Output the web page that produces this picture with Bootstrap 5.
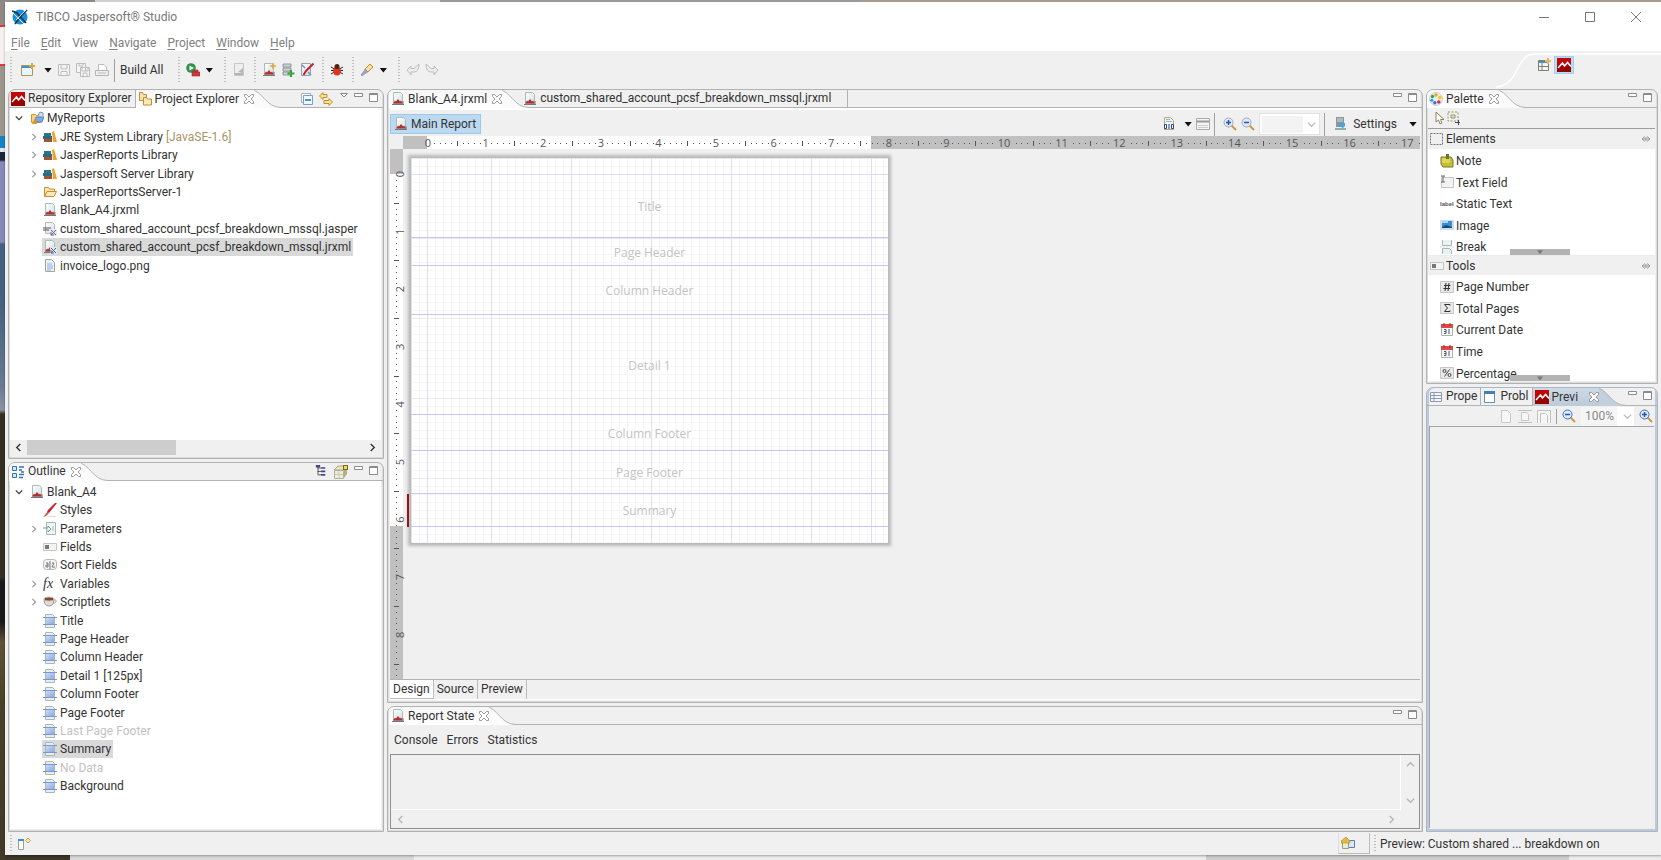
<!DOCTYPE html>
<html lang="en">
<head>
<meta charset="utf-8">
<meta name="viewport" content="width=device-width, initial-scale=1">
<title>TIBCO Jaspersoft® Studio</title>
<link href="https://cdn.jsdelivr.net/npm/bootstrap@5.3.0/dist/css/bootstrap.min.css" rel="stylesheet">
<style>
:root { --line:#b2b2b2; --face:#f0f0f0; --ink:#333; }
html, body { height:100%; }
body { font:12px/18px Roboto,"Open Sans",sans-serif; color:var(--ink); background:#dcdcdc; overflow:hidden; }
button, select, textarea, input { font:inherit; color:inherit; }
button { border:0; background:none; padding:0; white-space:nowrap; }
svg { display:block; flex:none; }
.ico { width:14px; height:14px; }
.desk { background:linear-gradient(90deg,#3b3626 0 70px,#d9d9d9 70px 414px,#ececec 414px 1206px,#cdcdcd 1206px 1569px,#ececec 1569px); }
.desk-side { width:5px; background:linear-gradient(#8e8b84 0 23px,#e33 23px 25px,#f6f0ee 25px 62px,#e33 62px 64px,#9a968b 64px 134px,#1583c9 134px 146px,#dce6ee 146px 150px,#1c2733 150px 158px,#8488bb 160px 240px,#46617f 242px 300px,#6a7a92 385px,#8b93a3 408px,#332f22 412px 575px,#19191b 580px 620px,#5d5238 640px,#4a412c 700px,#3f3926); }
.desk-top { height:2px; background:linear-gradient(90deg,#8a8984 0 95px,#d0d0d0 95px 440px,#999 440px 860px,#a69c8b 860px); }
.win { background:var(--face); margin-bottom:5px; box-shadow:0 1px 2px #0005; }
.titlebar { background:#fff; color:#777; height:49px; }
.caption-row { height:30px; padding:0 19px 0 7px; }
.caption-row button { width:12px; }
.winbtns { gap:34px; }
.menus { gap:11px; padding:2px 6px; color:#808080; }
.menus a { color:inherit; text-decoration:none; }
.menus u { text-underline-offset:2px; }
.mainbar { height:38px; padding:0 0 0 5px; }
.tgroup { display:flex; align-items:center; gap:5px; padding-right:8px; }
.tgroup.wide { padding-right:11px; }
.grip { width:2px; height:26px; margin-right:1px; background:repeating-linear-gradient(#bdbdbd 0 1px,transparent 1px 3px); flex:none; }
.drop { width:8px; height:5px; background:#111; clip-path:polygon(0 0,100% 0,50% 100%); flex:none; }
.vsep { width:1px; height:23px; background:#a0a0a0; flex:none; }
.persp { width:165px; position:relative; }
.persp .curve { position:absolute; inset:0; width:100%; height:100%; }
.persp .picks { position:relative; padding:6px 0 0 41px; gap:4px; }
.persp .on { background:#b9dcf6; outline:1px solid #a4cff1; padding:1px 2px; }
.work { padding:0 3px 0 3px; gap:3px; min-height:0; }
.side-l { width:376px; gap:3px; }
.mid { gap:3px; min-width:0; }
.side-r { width:232px; gap:3px; }
.pane { border:1px solid var(--line); border-radius:7px 7px 0 0; box-shadow:inset -1px -1px 0 #dcdcdc, inset 1px 0 0 #dcdcdc; background:var(--face); overflow:hidden; display:flex; flex-direction:column; min-height:0; padding:0 2px 2px 1px; }
.pane.inset { padding:0 2px 2px 2px; }
.tabs { height:18px; display:flex; flex:none; position:relative; margin:0 -2px 0 -1px; }
.tabs::before { content:""; position:absolute; left:0; right:0; bottom:0; height:1px; background:var(--line); }
.tabs > * { position:relative; }
.tabs button { display:flex; align-items:center; gap:3px; height:17px; line-height:17px; padding-left:2px; }
.tabs .cur { background:linear-gradient(#f6f6f6,#fff); height:18px; z-index:1; }
.tabs .edge { border-right:1px solid var(--line); padding-right:3px; }
.tabs .after { margin-left:-8px; }
.tabs .x { width:10px; height:10px; margin-left:2px; }
.tabs .sweep { width:34px; height:18px; margin-left:-7px; }
.acts { margin-left:auto; display:flex; gap:3px; padding-right:3px; align-items:flex-start; }
.acts svg { width:12px; height:12px; margin-top:2px; }
.acts .big { width:14px; height:14px; margin-right:2px; }
.white { background:#fff; }
.tree { list-style:none; margin:0; padding:0 0 0 4px; display:grid; grid-auto-rows:1fr; }
.tree li { display:flex; align-items:center; white-space:nowrap; }
.tree .tw { width:10px; height:8px; margin-right:5px; }
.tree .kid { padding-left:15px; }
.tree .kid .tw { margin-right:3px; color:#9a9a9a; }
.tree .item { display:flex; align-items:center; gap:3px; padding:0 2px 0 1px; height:18px; line-height:18px; }
.tree .sel { background:#d9d9d9; }
.tree .dim { color:#c3c3c3; }
.lib-ver { color:#a89468; }
.t-proj { height:166px; margin-top:1px; }
.t-out { height:313px; margin-top:2px; }
.sb { height:16px; background:var(--face); display:flex; align-items:center; flex:none; }
.sb svg { width:9px; height:9px; margin:0 4px; }
.sb .thumb { height:15px; width:149px; background:#cdcdcd; }
.edbar { height:28px; gap:4px; padding:2px 3px 0 0; border-top:2px solid #fff; }
.mainrep { border:1px solid #99c9ef; background:#bcd9f0; height:20px; width:91px; padding:0 4px 0 3px; gap:3px; line-height:18px; }
.setbtn { gap:6px; margin-right:8px; }
.combo { appearance:none; -webkit-appearance:none; border:1px solid #e2e2e2; border-radius:0; width:61px; height:22px; padding:0 4px; outline:0; background:linear-gradient(#f3f3f3,#f3f3f3) 2px 2px/41px 17px no-repeat,#fff; }
.combobox { position:relative; }
.combobox svg { position:absolute; right:4px; top:50%; width:9px; height:9px; margin-top:-4px; pointer-events:none; color:#c0c0c0; }
.ruler-h { height:13px; margin-left:13px; background:linear-gradient(90deg,#c0c0c0 24px,#fff 24px 468px,#c0c0c0 468px); overflow:hidden; flex:none; }
.ruler-h svg { width:100%; height:13px; }
.ruler-v { width:13px; background:linear-gradient(#c0c0c0 25px,#fff 25px 377px,#c0c0c0 377px); flex:none; }
.ruler-v svg { width:16px; height:100%; }
text.rt { font:11px "Open Sans",sans-serif; fill:#555; }
.canvas { overflow:hidden; min-height:0; }
.sheet { width:477px; height:385px; margin:9px 8px; padding-top:16px; flex:none; font-family:"Open Sans",sans-serif; box-shadow:0 0 3px 3px #b8b8b8; color:#c3c3c3; align-self:flex-start;
 background:
 linear-gradient(#dcdcff,#dcdcff) 16px 0/1px 100% no-repeat, linear-gradient(#dcdcff,#dcdcff) 460px 0/1px 100% no-repeat,
 linear-gradient(#dcdcff,#dcdcff) 0 16px/100% 1px no-repeat,
 linear-gradient(90deg,#e2e2e2 1px,transparent 1px) 0 0/80px 80px,
 linear-gradient(#ebebeb 1px,transparent 1px) 0 0/80px 80px,
 linear-gradient(90deg,#f6f6f6 1px,transparent 1px) 0 0/8px 8px,
 linear-gradient(#f6f6f6 1px,transparent 1px) 0 0/8px 8px, #fff; }
.band { border-bottom:1px solid #c5c5fa; display:flex; align-items:center; justify-content:center; position:relative; padding-top:2px; }
.band.active::before { content:""; position:absolute; left:-4px; top:0; bottom:-1px; width:2px; background:#9c1111; }
.pages { height:21px; border-top:1px solid var(--line); border-bottom:1px solid #fff; flex:none; align-items:flex-start; }
.pages button { height:19px; line-height:19px; padding:0 3px; border-right:1px solid #bdbdbd; }
.pages .cur { background:#fff; border-bottom:1px solid #bbb; }
.logtabs { height:29px; gap:9px; padding-left:4px; }
.log { border:1px solid #8f8f8f; background:var(--face); color:#b5b5b5; display:grid; grid-template-columns:1fr 18px; grid-template-rows:1fr 18px; }
.log textarea { border:0; border-right:1px solid #fff; border-bottom:1px solid #fff; background:none; resize:none; outline:0; min-width:0; min-height:0; width:100%; }
.log .sbv { display:flex; flex-direction:column; justify-content:space-between; align-items:center; padding:5px 0; }
.log .sbh { display:flex; justify-content:space-between; align-items:center; padding:0 5px; }
.log svg { width:9px; height:9px; }
.paltools { height:21px; padding:0 4px; gap:1px; border-bottom:1px solid #9d9d9d; flex:none; }
.palhead { height:20px; line-height:20px; padding:0 4px 0 2px; gap:2px; background:#f0f0f0; flex:none; width:100%; }
.drawer { position:relative; overflow:hidden; background:#fff; flex:1 1 0; }
.pal { list-style:none; margin:0; padding:2px 0 0 12px; height:110px; display:grid; grid-auto-rows:1fr; }
.pal button { display:flex; align-items:center; gap:2px; height:21px; line-height:23px; }
.pal svg { margin-bottom:2px; }
.more { position:absolute; bottom:0; left:82px; width:60px; height:6px; background:#b3b3b3; display:flex; justify-content:center; align-items:center; }
.more .drop { width:6px; height:4px; background:#777; }
.pane.live { border-color:#a9b8c8; box-shadow:inset 2px 0 0 #bfcad6, inset -2px -2px 0 #bfcad6; padding:0 3px 3px 2px; }
.live .tabs { margin:0 -3px 0 -2px; }
.live .tabs .cur { background:linear-gradient(#cdd9e4,#bccbda); }
.prevbar { height:20px; gap:5px; padding-right:1px; color:#8a8a8a; flex:none; }
.prevbar .vsep { height:15px; }
.prevbar .combo { border:0; width:53px; height:19px; background:linear-gradient(90deg,#f5f5f5 36px,#fff 36px); }
.prevbar .combobox svg { right:2px; }
.prevbody { border:1px solid #a5a5a5; border-width:1px 0 0 1px; }
.foot { height:23px; padding:0 0 0 5px; flex:none; }
.foot .grip { height:18px; }
.foot .job { width:32px; height:21px; border-right:1px solid #bbb; border-bottom:1px solid #bbb; border-left:1px solid #ddd; padding-left:2px; }
.foot .msg { width:284px; padding-left:3px; }
</style>
</head>
<body class="d-flex flex-column">
<svg width="0" height="0" class="position-absolute" aria-hidden="true">
<defs>
<linearGradient id="gPaper" x2="1" y2="1"><stop offset="0" stop-color="#fff"/><stop offset="1" stop-color="#cfdfe2"/></linearGradient>
<linearGradient id="gBand" x2="1" y2="1"><stop offset="0" stop-color="#c9dcf8"/><stop offset="1" stop-color="#8fa9dc"/></linearGradient>
</defs>
<symbol id="report" viewBox="0 0 14 14"><path d="M2.500.5h7l2 2v9h-9z" fill="url(#gPaper)" stroke="#a9bcb8"/><path d="M2 11.500l2-3 1 1 2-2.500 2 2.500 1-1 2 3z" fill="#b03030"/><path d="M1 12.500h12M12 9v3" stroke="#777"/></symbol>
<symbol id="reportc" viewBox="0 0 14 14"><use href="#report"/><path d="M7 7h7v7H7z" fill="#e4e8f0"/><path d="M8 8l5 5M13 8l-5 5M8 10v3h3" stroke="#445c8c" fill="none"/></symbol>
<symbol id="jasperf" viewBox="0 0 14 14"><path d="M2.500.5h7l2 2v9h-9z" fill="url(#gPaper)" stroke="#b5b9b8"/><path d="M1 5v4M3 5v4M5 5v4M7 5v2" stroke="#555"/><path d="M7 7h7v7H7z" fill="#e4e8f0"/><path d="M8 8l5 5M13 8l-5 5M8 10v3h3" stroke="#5a6a80" fill="none"/></symbol>
<symbol id="jred" viewBox="0 0 14 14"><path d="M0 0h14v14H0z" fill="#c00808"/><path d="M0 8h14v6H0z" fill="#900"/><path d="M1 10L5.500 5 7.500 8 10.500 4.500 14 8.500" stroke="#fff" stroke-width="1.500" fill="none"/></symbol>
<symbol id="folders" viewBox="0 0 14 14"><path d="M1.500.5h3l1 2h3v6h-7z" fill="#f7e3a8" stroke="#c18a3b"/><path d="M5.500 5.500h3l1 1.500h4v6h-8z" fill="#fbe9b4" stroke="#c18a3b"/></symbol>
<symbol id="proj" viewBox="0 0 14 14"><path d="M1.500 3.500h4l1 1h4v7h-9z" fill="#f6d487" stroke="#c9933c"/><path d="M5 11l1-5h8l-2 5z" fill="#7fa8dc" stroke="#5b86c4"/><path d="M8 4l2-3 3 1v4" fill="#cfe0f6" stroke="#6a93cc"/><path d="M2 13l3-6 2 6z" fill="#d99a2b"/></symbol>
<symbol id="lib" viewBox="0 0 14 14"><path d="M1 3h7v3H1z" fill="#287a78"/><path d="M0 6h9v3H0z" fill="#2f6690"/><path d="M1 9h8v3H1z" fill="#a4532c"/><path d="M9 2l2-1 3 11h-4z" fill="#eba432"/></symbol>
<symbol id="fopen" viewBox="0 0 14 14"><path d="M1.500 11V2.500h4l1 1.500h5v2" fill="#fbe7b0" stroke="#c98c35"/><path d="M1.500 11.500L4 6.500h9.500l-2.500 5z" fill="#fce8b2" stroke="#c98c35"/></symbol>
<symbol id="file" viewBox="0 0 14 14"><path d="M2.500.5h6l3 3v9h-9z" fill="#eaf0fb" stroke="#a5a98a"/><path d="M4 5h5M4 7h6M4 9h6M4 11h4" stroke="#8fb0e0"/></symbol>
<symbol id="band" viewBox="0 0 14 14"><path d="M2.500.5h7l2 2v11h-9z" fill="#e6efee" stroke="#a4bab2"/><path d="M3 4h8v6H3z" fill="url(#gBand)"/><path d="M0 3.500h14M0 10.500h14" stroke="#7f93d8"/></symbol>
<symbol id="brush" viewBox="0 0 14 14"><path d="M14 0L12 0 5 7 4 9l2 1z" fill="#c4232b"/><path d="M4.500 8.500l1.500 1.500-3 3-3 1 2-2z" fill="#b7583e"/><path d="M5 13.500h8" stroke="#ddd"/></symbol>
<symbol id="param" viewBox="0 0 14 14"><path d="M3.500.5h9v12h-9z" fill="#eef5f4" stroke="#a3b9b5"/><path d="M0 6h5V4l3 3-3 3V8" fill="none" stroke="#7f9a96"/><path d="M10 4v5" stroke="#a3b9b5"/></symbol>
<symbol id="field" viewBox="0 0 14 14"><path d="M.5 3.500h13v7H.5z" fill="#f4f4f4" stroke="#c5c5c5"/><path d="M2 5h4v4H2z" fill="#777"/></symbol>
<symbol id="sort" viewBox="0 0 14 14"><rect x=".5" y="1.500" width="13" height="10" rx="3" fill="#f3f3f3" stroke="#b5b5b5"/><path d="M3 5h2v4H3V7h2M7 3v8M9 5h2L9 9h3" stroke="#777" fill="none"/></symbol>
<symbol id="cup" viewBox="0 0 14 14"><path d="M1 4h10q0 7-5 7t-5-7z" fill="#ddd" stroke="#999"/><ellipse cx="6" cy="4" rx="5" ry="2" fill="#8a4a24" stroke="#bbb"/><path d="M11 5q3-1 2 2l-3 2" fill="none" stroke="#aaa"/></symbol>
<symbol id="tmin" viewBox="0 0 12 12"><path d="M1.500 1.500h8v3h-8z" fill="#fff" stroke="#8b8b8b"/></symbol>
<symbol id="tmax" viewBox="0 0 12 12"><path d="M1.500 1.500h8v8h-8z" fill="#fff" stroke="#8b8b8b"/><path d="M1 2.500h9" stroke="#8b8b8b"/></symbol>
<symbol id="vmenu" viewBox="0 0 12 12"><path d="M2.500 1.500h7L6 5z" fill="#fff" stroke="#8b8b8b"/></symbol>
<symbol id="cross" viewBox="0 0 10 10"><path d="M.5.5h2L5 3 7.500.5h2v2L7 5l2.500 2.500v2h-2L5 7 2.500 9.500h-2v-2L3 5 .5 2.500z" fill="#fff" stroke="#999"/></symbol>
<symbol id="right" viewBox="0 0 10 10"><path d="M3 1l4 4-4 4" fill="none" stroke="currentColor" stroke-width="1.500"/></symbol>
<symbol id="left" viewBox="0 0 10 10"><path d="M7 1L3 5l4 4" fill="none" stroke="currentColor" stroke-width="1.500"/></symbol>
<symbol id="down" viewBox="0 0 10 10"><path d="M1 3l4 4 4-4" fill="none" stroke="currentColor" stroke-width="1.500"/></symbol>
<symbol id="up" viewBox="0 0 10 10"><path d="M1 7l4-4 4 4" fill="none" stroke="currentColor" stroke-width="1.500"/></symbol>
<symbol id="sweep" viewBox="0 0 34 18"><path d="M0 0H5C15 0 20 17.500 34 17.500V18H0z" fill="var(--fill,#fbfbfb)"/><path d="M0 -.5H3C16 0 18 17.500 34 17.500" fill="none" stroke="#b2b2b2"/></symbol>
<symbol id="collapse" viewBox="0 0 14 14"><path d="M1.500 1.500h9v9h-9z" fill="#fff" stroke="#9fb4c8"/><path d="M3.500 3.500h9v9h-9z" fill="#eef6ff" stroke="#7ba0c8"/><path d="M5 8h6" stroke="#2c6cb0" stroke-width="1.500"/></symbol>
<symbol id="link" viewBox="0 0 14 14"><path d="M4 .5L.5 4 4 7.500V5.500h4v-3H4zM10 6.500v2H5v3h5v2l3.500-3.500z" fill="#fbe09a" stroke="#c88a2a"/></symbol>
<symbol id="new" viewBox="0 0 14 14"><path d="M.5 2.500h11v10H.5z" fill="#e9f5fc" stroke="#a89a55"/><path d="M1 3h9v2H1z" fill="#3f8fd0"/><path d="M11 0v6M8 3h6" stroke="#dca83c" stroke-width="2"/></symbol>
<symbol id="save" viewBox="0 0 14 14"><path d="M1.500 1.500h11v11h-11zM4 2v4h6V2M4 12V8.500h6V12" fill="#f5f5f5" stroke="#bcbcbc"/></symbol>
<symbol id="saveall" viewBox="0 0 14 14"><path d="M.5.5h9v9h-9zM3 1v2h4V1" fill="#f5f5f5" stroke="#bcbcbc"/><path d="M4.500 4.500h9v9h-9zM6 5v3h6V5M7 13v-3h4v3" fill="#f5f5f5" stroke="#bcbcbc"/></symbol>
<symbol id="print" viewBox="0 0 14 14"><path d="M3.500 7V1.500H9L11.500 4v3" fill="#fff" stroke="#bcbcbc"/><path d="M.5 7.500h13v5H.5z" fill="#eee" stroke="#b5b5b5"/><path d="M3 10h8" stroke="#bbb"/></symbol>
<symbol id="run" viewBox="0 0 14 14"><circle cx="5" cy="5" r="4.800" fill="#2f9248"/><path d="M3.500 2.500v5L8 5z" fill="#fff"/><path d="M6 9h8v4H6zM8 9V7h4v2" fill="#d0393b" stroke="#9c2528" stroke-width=".6"/></symbol>
<symbol id="compile" viewBox="0 0 14 14"><path d="M2.500 .5h9v12h-9z" fill="#eee" stroke="#c6c6c6"/><path d="M3 10h8v2H3zM6 9l5-4v5" fill="#b5b5b5"/></symbol>
<symbol id="newrep" viewBox="0 0 14 14"><use href="#report"/><path d="M11 0v6M8 3h6" stroke="#dca83c" stroke-width="1.500"/></symbol>
<symbol id="srv" viewBox="0 0 14 14"><path d="M2 1h8v3H2zM2 5h8v3H2zM2 9h8v3H2z" fill="#cfd4d6" stroke="#7d8486" stroke-width=".8"/><path d="M10 7v7M6.500 10.500h7" stroke="#3aa53c" stroke-width="2.200"/></symbol>
<symbol id="wiz" viewBox="0 0 14 14"><path d="M1.500.5h9v12h-9z" fill="url(#gPaper)" stroke="#98a0b4"/><path d="M13.500.5L6 8l-2.500 4" stroke="#c4232b" stroke-width="2" fill="none"/><path d="M2 2l3 3M8 9l3 3" stroke="#7a8fc0" stroke-width="1.500"/></symbol>
<symbol id="bug" viewBox="0 0 14 14"><path d="M1 4l12 7M13 4L1 11M1 7.500h12" stroke="#222"/><ellipse cx="7" cy="8" rx="4" ry="4.500" fill="#d8361f"/><circle cx="7" cy="3.500" r="2.500" fill="#4d2316"/></symbol>
<symbol id="torch" viewBox="0 0 14 14"><path d="M5 6l5-5 3 3-5 5z" fill="#f6dfa2" stroke="#c38b31"/><path d="M5 6l3 3-2 1-4 3-1-1 3-4z" fill="#a9a4c4" stroke="#8881a5" stroke-width=".6"/></symbol>
<symbol id="undo" viewBox="0 0 14 14"><path d="M1 7l4-4v2.500h3L13 1q0 8-5 8H5v3z" fill="#ececec" stroke="#bebebe"/></symbol>
<symbol id="redo" viewBox="0 0 14 14"><path d="M13 7L9 3v2.500H6L1 1q0 8 5 8h3v3z" fill="#ececec" stroke="#bebebe"/></symbol>
<symbol id="persp" viewBox="0 0 14 14"><path d="M1.500 2.500h10v10h-10zM5 5v7M1 8.500h10" fill="#eef5fb" stroke="#857f66"/><path d="M2 3h8v2H2z" fill="#4a90cc"/><path d="M11 0v6M8 3h6" stroke="#e3b660" stroke-width="2"/></symbol>
<symbol id="tree" viewBox="0 0 14 14"><path d="M3.500 1v10M3 3.500h4M3 7.500h4M3 11.500h4" stroke="#445" fill="none"/><path d="M1 0h5v3H1zM7 2.500h5v2H7zM7 6.500h5v2H7zM7 10.500h5v2H7z" fill="#464a80"/></symbol>
<symbol id="box3d" viewBox="0 0 14 14"><path d="M0 5l4-4h9l-3 4z" fill="#e9e6c6" stroke="#a9a380"/><path d="M10 5l3-4v8l-3 4z" fill="#b5ad7c"/><path d="M.5 5.500h9v8h-9z" fill="#eceade" stroke="#b5b09a"/><path d="M5 6v7M1 9.500h8" stroke="#cfcbb6"/><path d="M9 0h5v5H9z" fill="#776a22"/><path d="M10 1h3v3h-3z" fill="#f0de48"/></symbol>
<symbol id="outl" viewBox="0 0 14 14"><path d="M1.500 1.500h4v4h-4zM1.500 8.500h4v4h-4z" fill="#d6e9fa" stroke="#2d73b8"/><path d="M8 2h5M8 5h3M10 7h3M8 9.500h5M8 12.500h4" stroke="#2d73b8" stroke-width="1.500"/></symbol>
<symbol id="paint" viewBox="0 0 14 14"><circle cx="7" cy="7" r="6.500" fill="#e8ecf6" stroke="#c9d1e4"/><circle cx="7" cy="3" r="1.800" fill="#f2a51d"/><circle cx="11" cy="5.500" r="1.800" fill="#f6c816"/><circle cx="3.500" cy="4.500" r="1.700" fill="#3aa448"/><circle cx="2.800" cy="8.200" r="1.500" fill="#2e9fc0"/><circle cx="5.800" cy="10.800" r="1.700" fill="#3a70dd"/><circle cx="9.800" cy="10" r="1.800" fill="#d8322a"/></symbol>
<symbol id="arrow" viewBox="0 0 14 14"><path d="M4 1v10l2.500-2L8 13l2-1-1.500-3.500H12z" fill="#fff" stroke="#8d8360"/></symbol>
<symbol id="marquee" viewBox="0 0 14 14"><path d="M1 1h10v9H1z" fill="none" stroke="#9a9360" stroke-dasharray="2 1.500"/><path d="M4 4h4v3H4z" fill="#dfeadb" stroke="#9a9360"/><path d="M8 11.500h5M11.500 9v5" stroke="#446" /></symbol>
<symbol id="dashed" viewBox="0 0 14 14"><path d="M.5 1.500h12v11H.5z" fill="none" stroke="#777" stroke-dasharray="2 1"/></symbol>
<symbol id="pin" viewBox="0 0 10 10"><path d="M4 2.500L1 5l3 2.500M6 2.500L9 5 6 7.500M2 5h6M5 3v4" fill="none" stroke="#999"/></symbol>
<symbol id="note" viewBox="0 0 14 14"><path d="M1 3h10l2 3v7H3L1 10z" fill="#c5bd35" stroke="#7d7822"/><path d="M2 4h8v5H2z" fill="#dcd55a"/><path d="M6 0h3v5H6z" fill="#5d7a2e"/></symbol>
<symbol id="tfield" viewBox="0 0 14 14"><path d="M1.500 2.500h12v10h-12z" fill="#f3f3f3" stroke="#c4c4c4"/><path d="M1 1h4M3 1v6M1 7h4" stroke="#666"/></symbol>
<symbol id="img" viewBox="0 0 14 14"><path d="M0 2h14v10H0z" fill="#c9def2"/><path d="M2 3h10v7H2z" fill="#3a8cd6"/><path d="M2 9l4-2 6 2v1H2z" fill="#1f4d6a"/><path d="M2 3h6v2H2z" fill="#a7d3f5"/></symbol>
<symbol id="brk" viewBox="0 0 14 14"><path d="M2.500 0v5.500h9V0M2.500 14V8.500h7l2 2V14" fill="#eaf1f0" stroke="#a3b9b5"/><path d="M0 7h14" stroke="#cdd" stroke-dasharray="2 1"/></symbol>
<symbol id="hash" viewBox="0 0 14 14"><path d="M.5 1.500h13v11H.5z" fill="#e8e8e8" stroke="#c6c6c6"/><path d="M6 3L5 11M9 3L8 11M4 5.500h6.500M3.500 8.500H10" stroke="#333" fill="none"/></symbol>
<symbol id="sigma" viewBox="0 0 14 14"><path d="M.5 1.500h13v11H.5z" fill="#e8e8e8" stroke="#c6c6c6"/><path d="M10 4.500v-1H4.500L7.500 7l-3 3.500H10v-1" stroke="#333" fill="none"/></symbol>
<symbol id="cal" viewBox="0 0 14 14"><path d="M1.500 3.500h11v9h-11z" fill="#f5f8f5" stroke="#a5b5a8"/><path d="M1 1h12v4H1z" fill="#e04848"/><path d="M4 0v3M10 0v3" stroke="#a22"/><path d="M4 6.500h2v4H4M4 8.500h2M9 6v5" stroke="#557" fill="none"/></symbol>
<symbol id="pct" viewBox="0 0 14 14"><path d="M.5 1.500h13v11H.5z" fill="#e8e8e8" stroke="#c6c6c6"/><path d="M9.500 3.500l-5 7" stroke="#444"/><circle cx="4.500" cy="5" r="1.500" fill="none" stroke="#444"/><circle cx="9.500" cy="9" r="1.500" fill="none" stroke="#444"/></symbol>
<symbol id="tbl" viewBox="0 0 14 14"><path d="M1.500 2.500h11v9h-11zM5 3v8M2 5.500h10M2 8.500h10" fill="#f3f6fb" stroke="#8d9abb"/></symbol>
<symbol id="prob" viewBox="0 0 14 14"><path d="M1.500 1.500h10v11h-10z" fill="#fff" stroke="#6b8fae"/><path d="M1 1h11v3H1z" fill="#3c80bb"/></symbol>
<symbol id="pg" viewBox="0 0 14 14"><path d="M2.500 1.500h6l3 3v9h-9z" fill="#f6f6f6" stroke="#c8c8c8"/></symbol>
<symbol id="pgw" viewBox="0 0 14 14"><path d="M3.500 3.500h5l2 2v6h-7z" fill="#f6f6f6" stroke="#c8c8c8"/><path d="M0 1.500h14M0 13.500h14" stroke="#c0c0c0"/></symbol>
<symbol id="pgf" viewBox="0 0 14 14"><path d="M.5 14V1.500h13V14M3.500 14V4.500h5l2 2V14" fill="#f6f6f6" stroke="#c0c0c0"/></symbol>
<symbol id="zin" viewBox="0 0 14 14"><path d="M8 8l5 5" stroke="#c79a43" stroke-width="2"/><circle cx="5.500" cy="5.500" r="4.500" fill="#dceafb" stroke="var(--r,#a3a9ba)"/><path d="M3 5.500h5M5.500 3v5" stroke="#2d55b0" stroke-width="1.500"/></symbol>
<symbol id="zout" viewBox="0 0 14 14"><path d="M8 8l5 5" stroke="#c79a43" stroke-width="2"/><circle cx="5.500" cy="5.500" r="4.500" fill="#dceafb" stroke="var(--r,#a3a9ba)"/><path d="M3 5.500h5" stroke="#2d55b0" stroke-width="1.500"/></symbol>
<symbol id="data" viewBox="0 0 14 14"><path d="M2.500.5h6l3 3v9h-9z" fill="#f4f4ee" stroke="#b5a67c"/><path d="M4 2.500h4M4 4.500h6" stroke="#8fb0e0"/><path d="M2.500 7.500v4h2v-4zM7 7v5M9.500 7.500v4h2v-4z" fill="#fff" stroke="#27458a"/></symbol>
<symbol id="list" viewBox="0 0 14 14"><path d="M.5 1.500h13v11H.5z" fill="#f5f5f5" stroke="#aaa"/><path d="M1 4.500h12" stroke="#999" stroke-width="2"/><path d="M2 8.500h10M2 10.500h10" stroke="#ccc"/></symbol>
<symbol id="sett" viewBox="0 0 14 14"><path d="M3 0h8v10H3z" fill="#8a979c"/><path d="M4 2h6M4 4h6" stroke="#d5dde0"/><path d="M2 11h11v2H2z" fill="#9aa"/><path d="M6 6h6v3l-2 2-4-2z" fill="#4aa3df"/></symbol>
<symbol id="trim" viewBox="0 0 14 14"><path d="M1.500 2.500h5v10h-5z" fill="#fff" stroke="#99a592"/><path d="M1 2h6v2H1z" fill="#3f8fd0"/><path d="M11 1l2.500 2.500L11 6 8.500 3.500z" fill="#fbe9b4" stroke="#c79a43"/></symbol>
<symbol id="job" viewBox="0 0 14 14"><path d="M6.500 4.500h7v7h-7z" fill="#d9e7fa" stroke="#5a7cb8"/><path d="M1.500 6v6.500h6V6" fill="#e6ebd8" stroke="#99a06c"/><path d="M0 5l5-4 4 4v2H0z" fill="#e6b548" stroke="#b98a24" stroke-width=".6"/></symbol>
<symbol id="logo" viewBox="0 0 16 16"><circle cx="8" cy="8" r="7.500" fill="#1b8fdd"/><path d="M0 2l5 2 9 10M15 1L9 7 3 15" stroke="#143447" stroke-width="1.500" fill="none"/><path d="M1 4l11 11M14 1L4 11" stroke="#fff" stroke-width=".8"/></symbol>
</svg>

<div class="desk-top"></div>
<div class="desk d-flex flex-fill overflow-hidden">
<div class="desk-side flex-shrink-0"></div>
<div class="win flex-fill d-flex flex-column">
 <header class="titlebar">
  <div class="caption-row d-flex align-items-center">
   <svg width="16" height="16" class="me-1"><use href="#logo"/></svg><span class="flex-fill ps-1">TIBCO Jaspersoft® Studio</span>
   <div class="winbtns d-flex">
    <button aria-label="Minimize"><svg width="12" height="12"><path d="M1 6.500h10" stroke="#777"/></svg></button>
    <button aria-label="Maximize"><svg width="12" height="12"><path d="M1.500 1.500h9v9h-9z" fill="none" stroke="#777"/></svg></button>
    <button aria-label="Close"><svg width="12" height="12"><path d="M1 1l10 10M11 1L1 11" stroke="#777"/></svg></button>
   </div>
  </div>
  <nav class="menus d-flex"><a href="#"><u>F</u>ile</a><a href="#"><u>E</u>dit</a><a href="#">View</a><a href="#"><u>N</u>avigate</a><a href="#"><u>P</u>roject</a><a href="#"><u>W</u>indow</a><a href="#"><u>H</u>elp</a></nav>
 </header>

 <div class="mainbar d-flex flex-shrink-0">
  <div class="tgroup wide"><span class="grip me-1"></span><button aria-label="New"><svg class="ico"><use href="#new"/></svg></button><span class="drop ms-1"></span><button aria-label="Save"><svg class="ico"><use href="#save"/></svg></button><button aria-label="Save all"><svg class="ico"><use href="#saveall"/></svg></button><button aria-label="Print"><svg class="ico"><use href="#print"/></svg></button><span class="vsep"></span><button class="me-1">Build All</button></div>
  <div class="tgroup wide"><span class="grip"></span><button aria-label="Run"><svg class="ico"><use href="#run"/></svg></button><span class="drop"></span></div>
  <div class="tgroup"><span class="grip"></span><button aria-label="Compile"><svg class="ico"><use href="#compile"/></svg></button></div>
  <div class="tgroup"><span class="grip"></span><button aria-label="New report"><svg class="ico"><use href="#newrep"/></svg></button><button aria-label="New adapter"><svg class="ico"><use href="#srv"/></svg></button><button aria-label="Wizard"><svg class="ico"><use href="#wiz"/></svg></button></div>
  <div class="tgroup"><span class="grip"></span><button aria-label="Debug"><svg class="ico"><use href="#bug"/></svg></button></div>
  <div class="tgroup wide"><span class="grip"></span><button aria-label="Search"><svg class="ico"><use href="#torch"/></svg></button><span class="drop"></span></div>
  <div class="tgroup"><span class="grip"></span><button aria-label="Undo"><svg class="ico"><use href="#undo"/></svg></button><button aria-label="Redo"><svg class="ico"><use href="#redo"/></svg></button></div>
  <div class="persp ms-auto">
   <svg class="curve" viewBox="0 0 165 37" preserveAspectRatio="none"><path d="M0 35C24 34 18 4.500 38 3H165" fill="none" stroke="#fff" stroke-width="1.500"/></svg>
   <div class="picks d-flex align-items-center"><button aria-label="Open perspective"><svg class="ico"><use href="#persp"/></svg></button><button class="on" aria-label="Report Design"><svg class="ico"><use href="#jred"/></svg></button></div>
  </div>
 </div>

 <main class="work flex-fill d-flex">
  <div class="side-l d-flex flex-column flex-shrink-0">
   <section class="pane" style="flex:369 1 0">
    <div class="tabs"><button class="edge"><svg class="ico"><use href="#jred"/></svg>Repository Explorer</button><button class="cur"><svg class="ico"><use href="#folders"/></svg>Project Explorer<svg class="x"><use href="#cross"/></svg></button><svg class="sweep"><use href="#sweep"/></svg>
     <div class="acts"><svg class="big"><use href="#collapse"/></svg><svg class="big"><use href="#link"/></svg><svg><use href="#vmenu"/></svg><svg><use href="#tmin"/></svg><svg><use href="#tmax"/></svg></div></div>
    <div class="white flex-fill">
     <ul class="tree t-proj">
      <li><svg class="tw"><use href="#down"/></svg><span class="item"><svg class="ico"><use href="#proj"/></svg>MyReports</span></li>
      <li class="kid"><svg class="tw"><use href="#right"/></svg><span class="item"><svg class="ico"><use href="#lib"/></svg><span>JRE System Library <span class="lib-ver">[JavaSE-1.6]</span></span></span></li>
      <li class="kid"><svg class="tw"><use href="#right"/></svg><span class="item"><svg class="ico"><use href="#lib"/></svg>JasperReports Library</span></li>
      <li class="kid"><svg class="tw"><use href="#right"/></svg><span class="item"><svg class="ico"><use href="#lib"/></svg>Jaspersoft Server Library</span></li>
      <li class="kid"><svg class="tw"></svg><span class="item"><svg class="ico"><use href="#fopen"/></svg>JasperReportsServer-1</span></li>
      <li class="kid"><svg class="tw"></svg><span class="item"><svg class="ico"><use href="#report"/></svg>Blank_A4.jrxml</span></li>
      <li class="kid"><svg class="tw"></svg><span class="item"><svg class="ico"><use href="#jasperf"/></svg>custom_shared_account_pcsf_breakdown_mssql.jasper</span></li>
      <li class="kid"><svg class="tw"></svg><span class="item sel"><svg class="ico"><use href="#reportc"/></svg>custom_shared_account_pcsf_breakdown_mssql.jrxml</span></li>
      <li class="kid"><svg class="tw"></svg><span class="item"><svg class="ico"><use href="#file"/></svg>invoice_logo.png</span></li>
     </ul>
    </div>
    <div class="sb"><svg><use href="#left"/></svg><span class="thumb"></span><svg class="ms-auto"><use href="#right"/></svg></div>
   </section>
   <section class="pane" style="flex:370 1 0">
    <div class="tabs"><button class="cur"><svg class="ico"><use href="#outl"/></svg>Outline<svg class="x"><use href="#cross"/></svg></button><svg class="sweep"><use href="#sweep"/></svg>
     <div class="acts"><svg class="me-1"><use href="#tree"/></svg><svg class="big"><use href="#box3d"/></svg><svg><use href="#tmin"/></svg><svg><use href="#tmax"/></svg></div></div>
    <div class="white flex-fill">
     <ul class="tree t-out" id="outline"></ul>
    </div>
   </section>
  </div>

  <div class="mid flex-fill d-flex flex-column">
   <section class="pane inset" style="flex:616 1 0">
    <div class="tabs"><button class="cur"><svg class="ico"><use href="#report"/></svg>Blank_A4.jrxml<svg class="x"><use href="#cross"/></svg></button><svg class="sweep"><use href="#sweep"/></svg><button class="edge after pe-3"><svg class="ico"><use href="#report"/></svg>custom_shared_account_pcsf_breakdown_mssql.jrxml</button>
     <div class="acts"><svg><use href="#tmin"/></svg><svg><use href="#tmax"/></svg></div></div>
    <div class="edbar d-flex align-items-center flex-shrink-0">
     <button class="mainrep d-flex align-items-center"><svg class="ico"><use href="#report"/></svg>Main Report</button>
     <button class="ms-auto" aria-label="Dataset"><svg class="ico"><use href="#data"/></svg></button><span class="drop ms-1"></span>
     <button aria-label="Bands"><svg class="ico"><use href="#list"/></svg></button><span class="vsep"></span>
     <button class="ms-1" aria-label="Zoom in"><svg class="ico"><use href="#zin"/></svg></button><button aria-label="Zoom out"><svg class="ico"><use href="#zout"/></svg></button>
     <span class="combobox"><select class="combo" aria-label="Zoom"><option></option></select><svg><use href="#down"/></svg></span><span class="vsep me-1"></span>
     <button class="setbtn d-flex align-items-center"><svg class="ico"><use href="#sett"/></svg>Settings</button><span class="drop"></span>
    </div>
    <div class="ruler-h"><svg id="rh"></svg></div>
    <div class="canvas flex-fill d-flex">
     <div class="ruler-v"><svg id="rv"></svg></div>
     <div class="sheet" id="sheet"></div>
    </div>
    <div class="pages d-flex"><button class="cur">Design</button><button>Source</button><button>Preview</button></div>
   </section>
   <section class="pane inset" style="flex:123 1 0">
    <div class="tabs"><button class="cur"><svg class="ico"><use href="#report"/></svg>Report State<svg class="x"><use href="#cross"/></svg></button><svg class="sweep"><use href="#sweep"/></svg>
     <div class="acts"><svg><use href="#tmin"/></svg><svg><use href="#tmax"/></svg></div></div>
    <div class="logtabs d-flex align-items-center flex-shrink-0"><button>Console</button><button>Errors</button><button>Statistics</button></div>
    <div class="log flex-fill"><textarea readonly rows="1" aria-label="Console output"></textarea><div class="sbv"><svg><use href="#up"/></svg><svg><use href="#down"/></svg></div><div class="sbh"><svg><use href="#left"/></svg><svg><use href="#right"/></svg></div></div>
   </section>
  </div>

  <div class="side-r d-flex flex-column flex-shrink-0">
   <section class="pane" style="flex:295 1 0">
    <div class="tabs"><button class="cur"><svg class="ico"><use href="#paint"/></svg>Palette<svg class="x"><use href="#cross"/></svg></button><svg class="sweep"><use href="#sweep"/></svg>
     <div class="acts"><svg><use href="#tmin"/></svg><svg><use href="#tmax"/></svg></div></div>
    <div class="paltools d-flex align-items-center"><svg class="ico"><use href="#arrow"/></svg><svg class="ico"><use href="#marquee"/></svg></div>
    <button class="palhead d-flex align-items-center"><svg class="ico"><use href="#dashed"/></svg>Elements<svg width="10" height="10" class="ms-auto"><use href="#pin"/></svg></button>
    <div class="drawer"><ul class="pal" id="elems"></ul><span class="more"><span class="drop"></span></span></div>
    <button class="palhead d-flex align-items-center border-top border-secondary-subtle"><svg class="ico"><use href="#field"/></svg>Tools<svg width="10" height="10" class="ms-auto"><use href="#pin"/></svg></button>
    <div class="drawer"><ul class="pal" id="tools"></ul><span class="more"><span class="drop"></span></span></div>
   </section>
   <section class="pane live" style="flex:445 1 0">
    <div class="tabs"><button class="edge"><svg class="ico"><use href="#tbl"/></svg>Prope</button><button class="edge"><svg class="ico"><use href="#prob"/></svg>Probl</button><button class="cur"><svg class="ico"><use href="#jred"/></svg>Previ<svg class="x ms-2"><use href="#cross"/></svg></button><svg class="sweep" style="--fill:#c2d0dd"><use href="#sweep"/></svg>
     <div class="acts"><svg><use href="#tmin"/></svg><svg><use href="#tmax"/></svg></div></div>
    <div class="prevbar d-flex align-items-center justify-content-end" style="--r:#3f6db8"><svg class="ico"><use href="#pg"/></svg><svg class="ico"><use href="#pgw"/></svg><svg class="ico"><use href="#pgf"/></svg><span class="vsep"></span><svg class="ico"><use href="#zout"/></svg><span class="combobox"><select class="combo" aria-label="Preview zoom"><option>100%</option></select><svg><use href="#down"/></svg></span><svg class="ico"><use href="#zin"/></svg></div>
    <div class="prevbody flex-fill"></div>
   </section>
  </div>
 </main>

 <footer class="foot d-flex align-items-center">
  <span class="grip"></span><button class="ms-1" aria-label="Show view"><svg class="ico"><use href="#trim"/></svg></button>
  <button class="job ms-auto me-1" aria-label="Background job"><svg class="ico"><use href="#job"/></svg></button><span class="grip"></span><span class="msg">Preview: Custom shared ... breakdown on</span>
 </footer>
</div>
</div>
<script src="https://cdn.jsdelivr.net/npm/bootstrap@5.3.0/dist/js/bootstrap.bundle.min.js"></script>
<script>
const ico = id => `<svg class="ico"><use href="#${id}"/></svg>`;
const fx = '<svg class="ico"><text x="0" y="11" style="font:italic 14px Liberation Serif,serif" fill="#333">fx</text></svg>';
const rows = [['Styles','brush'],['Parameters','param',1],['Fields','field'],['Sort Fields','sort'],['Variables','fx',1],['Scriptlets','cup',1],
 ['Title','band'],['Page Header','band'],['Column Header','band'],['Detail 1 [125px]','band'],['Column Footer','band'],['Page Footer','band'],
 ['Last Page Footer','band',0,'dim'],['Summary','band',0,'sel'],['No Data','band',0,'dim'],['Background','band']];
document.getElementById('outline').innerHTML =
 `<li><svg class="tw"><use href="#down"/></svg><span class="item">${ico('report')}Blank_A4</span></li>` +
 rows.map(([t,i,k,c='']) => `<li class="kid"><svg class="tw">${k?'<use href="#right"/>':''}</svg><span class="item ${c}">${i==='fx'?fx:ico(i)}${t}</span></li>`).join('');

const label = '<svg class="ico"><text x="0" y="9" style="font:bold 6px Liberation Sans,sans-serif" fill="#555">label</text></svg>';
const pal = l => l.map(([t,i]) => `<li><button>${i==='label'?label:ico(i)}${t}</button></li>`).join('');
document.getElementById('elems').innerHTML = pal([['Note','note'],['Text Field','tfield'],['Static Text','label'],['Image','img'],['Break','brk']]);
document.getElementById('tools').innerHTML = pal([['Page Number','hash'],['Total Pages','sigma'],['Current Date','cal'],['Time','cal'],['Percentage','pct']]);

/* report bands: name, height */
document.getElementById('sheet').innerHTML = [['Title',64],['Page Header',28],['Column Header',49],['Detail 1',100],['Column Footer',36],['Page Footer',43],['Summary',33]]
 .map(([n,h]) => `<div class="band${n==='Summary'?' active':''}" style="height:${h}px">${n}</div>`).join('');

/* rulers: ten divisions to each unit, as long as the ruler's own box */
const unit = 57.6, div = unit / 10;
function ruler(vertical, zero, length) {
  let s = '';
  for (let n = 0; zero + n * unit + 8 < length; n++) {
    const p = zero + n * unit;
    s += vertical ? `<text class="rt" text-anchor="middle" transform="translate(14 ${p}) rotate(-90)">${n}</text>`
                  : `<text class="rt" text-anchor="middle" x="${p}" y="11">${n}</text>`;
    for (let d = 1; d < 10; d++) {
      if (!vertical && ((n > 9 && d === 1) || (n > 8 && d === 9))) continue;
      const q = Math.round(p + d * div), half = d === 5 ? 2 : 0, len = d === 5 ? 5 : 1;
      s += vertical ? `<path d="M${6-half} ${q+.5}h${len}" stroke="#555"/>` : `<path d="M${q+.5} ${7-half}v${len}" stroke="#555"/>`;
    }
  }
  return s;
}
function drawRulers() {
  const h = document.getElementById('rh'), v = document.getElementById('rv');
  h.innerHTML = ruler(false, 25, h.parentNode.clientWidth);
  v.innerHTML = ruler(true, 25, v.parentNode.clientHeight);
}
drawRulers();
addEventListener('resize', drawRulers);
</script>
</body>
</html>
